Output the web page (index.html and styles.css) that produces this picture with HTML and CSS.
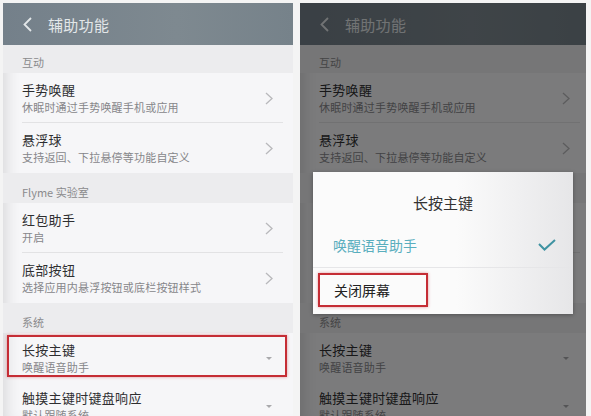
FILE: index.html
```html
<!DOCTYPE html>
<html>
<head>
<meta charset="utf-8">
<title>辅助功能</title>
<link rel="stylesheet" href="styles.css">
</head>

<body>

<div class="shots">

<div class="phone">
<div class="topBar">
<svg class="back" width="9" height="15" viewBox="0 0 9 15"><polyline points="8,1 1.5,7.5 8,14"/></svg>
<span class="barTitle">辅助功能</span>
</div>
<div class="section">互动</div>
<div class="item line">
<div><div class="itemTitle">手势唤醒</div><div class="itemSub">休眠时通过手势唤醒手机或应用</div></div>
<svg class="arrow" width="8" height="13" viewBox="0 0 8 13"><polyline points="1,1 7,6.5 1,12"/></svg>
</div>
<div class="item">
<div><div class="itemTitle">悬浮球</div><div class="itemSub">支持返回、下拉悬停等功能自定义</div></div>
<svg class="arrow" width="8" height="13" viewBox="0 0 8 13"><polyline points="1,1 7,6.5 1,12"/></svg>
</div>
<div class="section tall">Flyme 实验室</div>
<div class="item line">
<div><div class="itemTitle">红包助手</div><div class="itemSub">开启</div></div>
<svg class="arrow" width="8" height="13" viewBox="0 0 8 13"><polyline points="1,1 7,6.5 1,12"/></svg>
</div>
<div class="item">
<div><div class="itemTitle">底部按钮</div><div class="itemSub">选择应用内悬浮按钮或底栏按钮样式</div></div>
<svg class="arrow" width="8" height="13" viewBox="0 0 8 13"><polyline points="1,1 7,6.5 1,12"/></svg>
</div>
<div class="section tall">系统</div>
<div class="item short marked">
<div><div class="itemTitle">长按主键</div><div class="itemSub">唤醒语音助手</div></div>
<span class="drop"></span>
</div>
<div class="item">
<div><div class="itemTitle">触摸主键时键盘响应</div><div class="itemSub">默认跟随系统</div></div>
<span class="drop"></span>
</div>
</div>

<div class="phone dimmed">
<div class="topBar">
<svg class="back" width="9" height="15" viewBox="0 0 9 15"><polyline points="8,1 1.5,7.5 8,14"/></svg>
<span class="barTitle">辅助功能</span>
</div>
<div class="section">互动</div>
<div class="item line">
<div><div class="itemTitle">手势唤醒</div><div class="itemSub">休眠时通过手势唤醒手机或应用</div></div>
<svg class="arrow" width="8" height="13" viewBox="0 0 8 13"><polyline points="1,1 7,6.5 1,12"/></svg>
</div>
<div class="item">
<div><div class="itemTitle">悬浮球</div><div class="itemSub">支持返回、下拉悬停等功能自定义</div></div>
<svg class="arrow" width="8" height="13" viewBox="0 0 8 13"><polyline points="1,1 7,6.5 1,12"/></svg>
</div>
<div class="section tall">Flyme 实验室</div>
<div class="item line">
<div><div class="itemTitle">红包助手</div><div class="itemSub">开启</div></div>
<svg class="arrow" width="8" height="13" viewBox="0 0 8 13"><polyline points="1,1 7,6.5 1,12"/></svg>
</div>
<div class="item">
<div><div class="itemTitle">底部按钮</div><div class="itemSub">选择应用内悬浮按钮或底栏按钮样式</div></div>
<svg class="arrow" width="8" height="13" viewBox="0 0 8 13"><polyline points="1,1 7,6.5 1,12"/></svg>
</div>
<div class="section tall">系统</div>
<div class="item short">
<div><div class="itemTitle">长按主键</div><div class="itemSub">唤醒语音助手</div></div>
<span class="drop"></span>
</div>
<div class="item">
<div><div class="itemTitle">触摸主键时键盘响应</div><div class="itemSub">默认跟随系统</div></div>
<span class="drop"></span>
</div>

<div class="shade"></div>

<div class="dialog">
<div class="dialogTitle">长按主键</div>
<div class="option picked">
<span>唤醒语音助手</span>
<svg width="18" height="12" viewBox="0 0 18 12"><polyline points="1,5 6.5,10.5 17,1"/></svg>
</div>
<div class="option">
<span class="optMark">关闭屏幕</span>
</div>
</div>
</div>

</div>

</body>
</html>
```

FILE: styles.css
```css
body {
    margin: 0;
    background-color: #f4f4f4;
    font-family: "Noto Sans CJK SC", "Liberation Sans", sans-serif;
    overflow: hidden;
}
.shots {
    display: flex;
    gap: 7px;
    padding: 3px 0 0 3px;
    height: 413px;
}
.phone {
    position: relative;
    width: 290px;
    height: 413px;
    overflow: hidden;
    background-color: #f6f6f8;
    box-shadow: inset 14px 0 16px -12px rgba(0,0,0,0.14);
}
.phone.dimmed {
    width: 286px;
}
.phone.dimmed .item {
    margin-right: 6px;
}

/* header */
.topBar {
    height: 42px;
    display: flex;
    align-items: center;
    padding-left: 20px;
    background: linear-gradient(to right, #74808a, #7e8990 60%, #76828a);
}
.back {
    fill: none;
    stroke: #e2e6e8;
    stroke-width: 1.8;
}
.barTitle {
    margin-left: 16px;
    font-size: 15px;
    color: #e3e7e9;
    letter-spacing: 0.3px;
}

/* list */
.section {
    height: 28px;
    box-sizing: border-box;
    padding: 10px 0 0 19px;
    font-size: 11px;
    line-height: 14px;
    color: #8a8a8c;
    background-color: #ececee;
}
.section.tall {
    height: 30px;
    padding-top: 12px;
}
.item {
    position: relative;
    display: flex;
    align-items: center;
    justify-content: space-between;
    margin: 0 10px 0 19px;
    padding: 8px 10px 6px 0;
    border-bottom: 1px solid transparent;
}
.item.line {
    border-bottom-color: #e2e2e4;
}
.item.short {
    padding-bottom: 4px;
}
.itemTitle {
    font-size: 13px;
    line-height: 18px;
    color: #2e2e30;
    letter-spacing: 0.3px;
}
.itemSub {
    font-size: 11px;
    line-height: 17px;
    color: #86868a;
    letter-spacing: 0.2px;
}
.arrow {
    fill: none;
    stroke: #b8b8bb;
    stroke-width: 1.3;
}
.drop {
    width: 0;
    height: 0;
    margin-right: 1px;
    border-left: 3px solid transparent;
    border-right: 3px solid transparent;
    border-top: 3px solid #a9a9ac;
}
.item.marked::after {
    content: "";
    position: absolute;
    left: -15px;
    right: -4px;
    top: 2px;
    bottom: 3px;
    border: 2px solid #c52d35;
    box-shadow: 0 0 3px rgba(200,40,50,0.45);
}

/* dialog on the right shot */
.shade {
    position: absolute;
    top: 0;
    left: 0;
    right: 0;
    bottom: 0;
    background-color: rgba(0,0,0,0.5);
}
.dialog {
    position: absolute;
    left: 13px;
    top: 169px;
    width: 260px;
    height: 142px;
    background: linear-gradient(to right, #fbfbfb 55%, #e6e6e8);
    box-shadow: 0 1px 4px rgba(0,0,0,0.3);
}
.dialogTitle {
    height: 50px;
    box-sizing: border-box;
    padding-top: 20px;
    text-align: center;
    font-size: 15px;
    line-height: 22px;
    color: #333;
}
.option {
    display: flex;
    align-items: center;
    justify-content: space-between;
    font-size: 14px;
    color: #222;
}
.option.picked {
    height: 45px;
    padding: 0 17px 0 20px;
    color: #5aaebe;
    border-bottom: 1px solid #e6e6e8;
}
.option.picked svg {
    fill: none;
    stroke: #3f93a2;
    stroke-width: 2;
}
.optMark {
    width: 110px;
    height: 34px;
    box-sizing: border-box;
    margin: 5px 0 0 5px;
    padding-left: 14px;
    line-height: 30px;
    border: 2px solid #c52d35;
    box-shadow: 0 0 3px rgba(200,40,50,0.45);
}
```
